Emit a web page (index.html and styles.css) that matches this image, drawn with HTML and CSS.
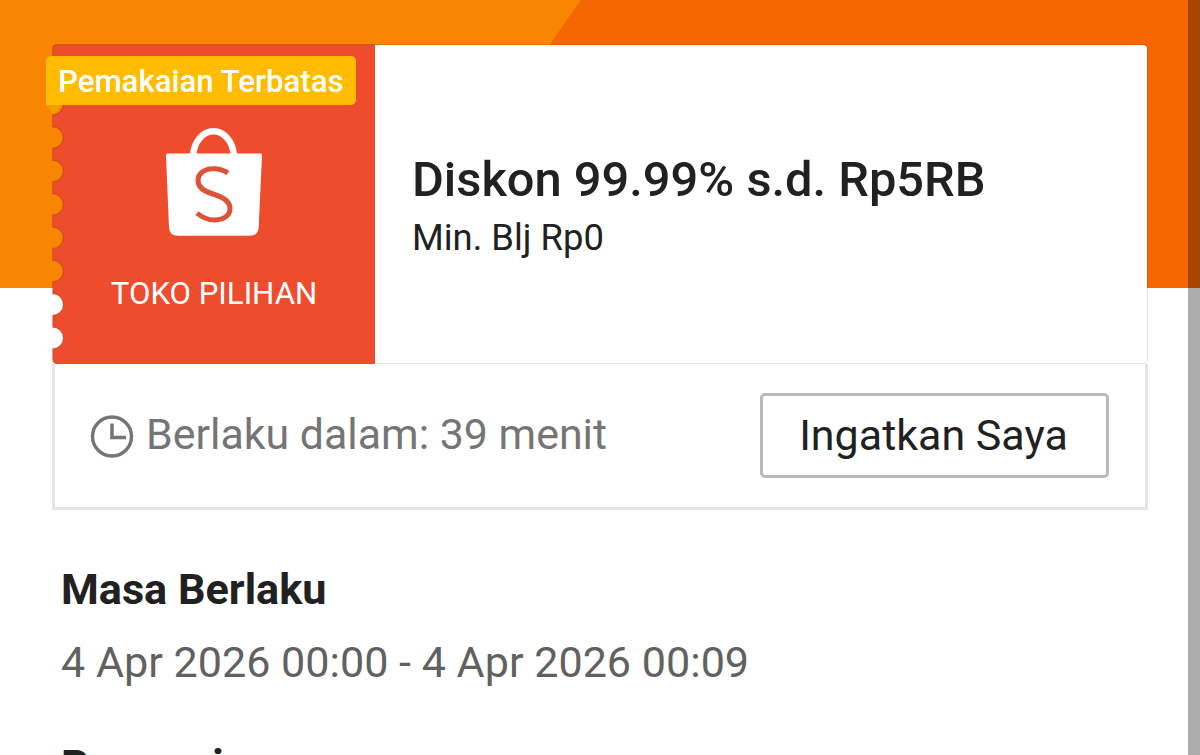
FILE: index.html
```html
<!DOCTYPE html>
<html lang="id">
<head>
  <meta charset="UTF-8">
  <meta name="viewport" content="width=device-width, initial-scale=1.0">
  <title>Detail Voucher</title>
  <link rel="stylesheet" href="styles.css">
</head>
<body>

  <div class="page">
    <div class="hero"></div>

    <div class="voucher">
      <div class="ticket">
        <div class="ticket-left">
          <svg class="ticket-shape" width="323" height="320" viewBox="0 0 323 320">
            <path d="M5.5 .5H323V320H5.5Q.6 320 .6 315V304.6A10.6 10.6 0 0 0 .6 283.4V271.2A10.6 10.6 0 0 0 .6 250V237.8A10.6 10.6 0 0 0 .6 216.6V204.4A10.6 10.6 0 0 0 .6 183.2V171A10.6 10.6 0 0 0 .6 149.8V137.6A10.6 10.6 0 0 0 .6 116.4V104.2A10.6 10.6 0 0 0 .6 83V70.8A10.6 10.6 0 0 0 .6 49.6V5Q.6 .5 5.5 .5Z" fill="#ee4d2d"/>
            <path d="M323 .5H5.5Q.6 .5 .6 5V49.6A10.6 10.6 0 0 1 .6 70.8V83A10.6 10.6 0 0 1 .6 104.2V116.4A10.6 10.6 0 0 1 .6 137.6V149.8A10.6 10.6 0 0 1 .6 171V183.2A10.6 10.6 0 0 1 .6 204.4V216.6A10.6 10.6 0 0 1 .6 237.8V250A10.6 10.6 0 0 1 .6 271.2V283.4A10.6 10.6 0 0 1 .6 304.6V315Q.6 320 5.5 320" fill="none" stroke="#000" stroke-opacity=".12" stroke-width="1.4"/>
          </svg>
          <svg class="bag" width="98" height="110" viewBox="0 0 98 110">
            <path d="M28 28C29 13 38 3.3 48.5 3.3S68 13 69 28" fill="none" stroke="#fff" stroke-width="6.5"/>
            <path d="M2.5 25.5H95.5Q97 25.5 97 27.5L93.7 99.5Q93 107.8 84.500 107.8H13Q4.500 107.8 4 99.5L1 27.5Q1 25.5 2.5 25.5Z" fill="#fff"/>
            <path d="M63 45C58 41.5 53 40.3 47.5 40.7C38.5 41 33 46 33 52.5C33 59.5 38.5 63 48 66C58 69 65 73 65 80.5C65 88 58 92 49.5 92C42.5 92 36.500 89 32 85" fill="none" stroke="#dd5239" stroke-width="5"/>
          </svg>
          <span class="shop">TOKO PILIHAN</span>
        </div>
        <div class="ticket-right">
          <div class="title">Diskon 99.99% s.d. Rp5RB</div>
          <div class="min">Min. Blj Rp0</div>
        </div>
        <div class="badge">Pemakaian Terbatas</div>
      </div>

      <div class="status">
        <svg class="clock" width="44" height="44" viewBox="0 0 44 44" fill="none" stroke="#757575">
          <circle cx="22" cy="21.5" r="19.5" stroke-width="3.4"/>
          <path d="M22 8.5V22.500H36" stroke-width="3.5"/>
        </svg>
        <span class="time">Berlaku dalam: 39 menit</span>
        <button class="remind">Ingatkan Saya</button>
      </div>
    </div>

    <div class="details">
      <h2>Masa Berlaku</h2>
      <p>4 Apr 2026 00:00 - 4 Apr 2026 00:09</p>
      <h2>Promosi</h2>
    </div>

    <div class="edge"></div>
  </div>

</body>
</html>
```
FILE: styles.css
```css
* {
  box-sizing: border-box;
}

body {
  margin: 0;
  font-family: Roboto, sans-serif;
  color: #212121;
  background: #fff;
}

.page {
  position: relative;
  height: 755px;
  padding: 44px 52px 0;
  overflow: hidden;
}

.hero {
  position: absolute;
  top: 0;
  left: 0;
  width: 100%;
  height: 288px;
  background: #fa8500;
}

.hero::after {
  content: "";
  position: absolute;
  inset: 0;
  background: #f56700;
  clip-path: polygon(581px 0, 100% 0, 100% 100%, 378px 100%);
}

.voucher {
  position: relative;
  width: 1096px;
}

.ticket {
  position: relative;
  display: flex;
  height: 320px;
}

.ticket-left {
  position: relative;
  display: flex;
  flex-direction: column;
  align-items: center;
  width: 323px;
  padding-top: 84px;
}

.ticket-shape {
  position: absolute;
  top: 0;
  left: 0;
}

.bag {
  position: relative;
}

.shop {
  position: relative;
  margin: 37px 0 0 1px;
  font-size: 31.2px;
  line-height: 38px;
  color: #fff;
}

.ticket-right {
  flex: 1;
  padding: 105px 36px 0 37px;
  border: 1px solid rgba(0, 0, 0, 0.1);
  border-left: none;
  border-radius: 0 5px 5px 0;
  background: #fff;
  background-clip: padding-box;
}

.title {
  font-size: 48.8px;
  font-weight: 500;
  line-height: 60px;
  white-space: nowrap;
}

.min {
  font-size: 36.4px;
  line-height: 56px;
}

.badge {
  position: absolute;
  top: 12px;
  left: -6px;
  width: 310px;
  height: 49px;
  padding-left: 12px;
  font-size: 31.2px;
  font-weight: 500;
  line-height: 52px;
  white-space: nowrap;
  color: #fff;
  background: #ffbc00;
  border-radius: 5px 5px 5px 0;
}

.badge::after {
  content: "";
  position: absolute;
  top: 49px;
  left: 0;
  width: 16px;
  height: 9px;
  background: #e9a800;
  opacity: 0.8;
  clip-path: polygon(0 0, 100% 0, 50% 100%);
}

.status {
  display: flex;
  align-items: center;
  height: 146px;
  padding: 0 36px 0 35px;
  border: 3px solid #e5e5e5;
  border-top: none;
  background: #fff;
}

.clock {
  margin-top: 2px;
}

.time {
  margin: -3px 0 0 12px;
  font-size: 42.9px;
  color: #757575;
}

.remind {
  width: 349px;
  height: 85px;
  margin-left: auto;
  padding: 0 2px 1px 0;
  border: 3px solid #bababa;
  border-radius: 5px;
  background: #fff;
  font-family: inherit;
  font-size: 43px;
  color: #212121;
}

.details {
  padding: 55px 0 0 9px;
}

.details h2 {
  margin: 0;
  font-size: 43.2px;
  font-weight: 700;
  line-height: 50px;
}

.details p {
  margin: 23px 0 53px;
  font-size: 43.1px;
  line-height: 50px;
  color: #616161;
}

/* dimmed strip along the right side */
.edge {
  position: absolute;
  top: 0;
  right: 0;
  width: 12px;
  height: 100%;
  background: rgba(0, 0, 0, 0.32);
}
```
